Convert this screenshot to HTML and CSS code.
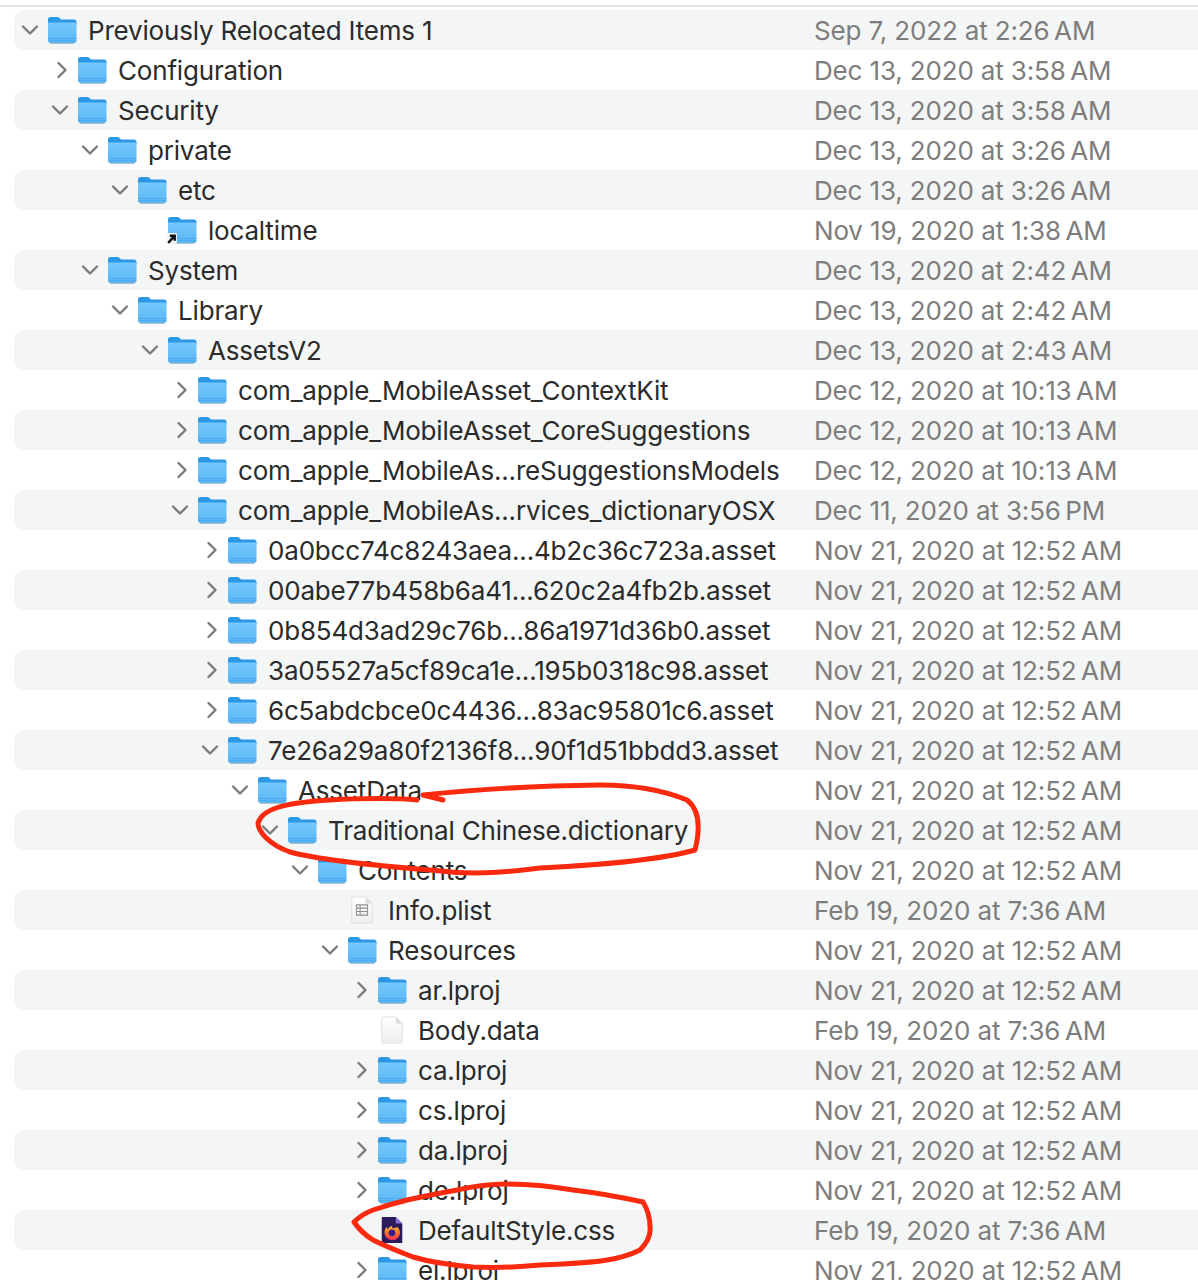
FILE: index.html
```html
<!DOCTYPE html>
<html lang="en">
<head>
<meta charset="utf-8">
<title>Previously Relocated Items</title>
<link rel="stylesheet" href="styles.css">
</head>
<body>
<svg class="defs" width="0" height="0" aria-hidden="true">
  <defs>
    <linearGradient id="fbody" x1="0" y1="0" x2="0" y2="1"><stop offset="0" stop-color="#74c9fc"/><stop offset="1" stop-color="#5ab6f5"/></linearGradient>
    <linearGradient id="fpage" x1="0" y1="0" x2="0" y2="1"><stop offset="0" stop-color="#ffffff"/><stop offset="1" stop-color="#eeeeee"/></linearGradient>
    <linearGradient id="ffire" x1="0" y1="0" x2="0" y2="1"><stop offset="0" stop-color="#ffc02e"/><stop offset=".55" stop-color="#ff6a2a"/><stop offset="1" stop-color="#ec2a6a"/></linearGradient>
    <symbol id="folder" viewBox="0 0 30 28">
      <path d="M1 5.500V3.500C1 2 2 1 3.500 1H10C11.500 1 12 1.500 13 2.500L14 3.500H27C28.500 3.500 29.500 4.500 29.500 6V9H1Z" fill="#2c97e6"/>
      <path d="M1 6.500H27.500C28.800 6.500 29.500 7.200 29.500 8.500V24.500C29.500 26 28.500 27 27 27H3.500C2 27 1 26 1 24.500Z" fill="url(#fbody)"/>
      <path d="M1 22.500H29.500M1 24.800H29.500" stroke="#3f9fe6" stroke-width=".8" opacity=".7" fill="none"/>
      <path d="M3 27.500H27.500" stroke="#9aa7b0" stroke-width="1" opacity=".7"/>
    </symbol>
    <symbol id="chev-open" viewBox="0 0 20 20"><path d="M3 6.500L10 13.500L17 6.500" fill="none" stroke="#7b7b7b" stroke-width="2.400" stroke-linecap="round" stroke-linejoin="round"/></symbol>
    <symbol id="chev-closed" viewBox="0 0 20 20"><path d="M8.500 3L15.500 10L8.500 17" fill="none" stroke="#7b7b7b" stroke-width="2.400" stroke-linecap="round" stroke-linejoin="round"/></symbol>
    <symbol id="doc" viewBox="0 0 30 30">
      <path d="M5.500 1H19L26 8V27.500C26 28.300 25.500 29 24.500 29H5.500C4.500 29 4 28.300 4 27.500V2.500C4 1.700 4.500 1 5.500 1Z" fill="url(#fpage)" stroke="#d8d8d8" stroke-width=".8"/>
      <path d="M19 1V8H26Z" fill="#dcdcdc"/>
    </symbol>
    <symbol id="plist" viewBox="0 0 30 30">
      <use href="#doc" width="30" height="30"/>
      <path d="M9 9.500H21V20.500H9ZM9 13H21M9 16.700H21M13 9.500V20.500" fill="none" stroke="#8e8e8e" stroke-width="1.100"/>
    </symbol>
    <symbol id="css" viewBox="0 0 30 30">
      <path d="M5 1H19L26 8V28C26 28.600 25.600 29 25 29H5C4.400 29 4 28.600 4 28V2C4 1.400 4.400 1 5 1Z" fill="#2b1b5e"/>
      <path d="M19 1V8H26Z" fill="#8c6fd8"/>
      <path d="M7 17.500C7 15 8 13 9.500 11.500C9.500 13 10 14 11 14C11.500 12 13.500 11 15.500 10.500C15 11.500 15 12.500 15.500 13C18 12.500 20 13 20.500 11.500C22.500 13.500 23.500 15.500 23.500 18C23.500 22.500 19.800 26 15.200 26C10.700 26 7 22.300 7 17.500Z" fill="url(#ffire)"/>
      <circle cx="15" cy="18" r="3.600" fill="#3a1f8a"/>
    </symbol>
  </defs>
</svg>

<main class="list">
  <div class="row d0"><div class="name"><svg class="chev"><use href="#chev-open"/></svg><svg class="ico"><use href="#folder"/></svg><span class="label">Previously Relocated Items 1</span></div><div class="date">Sep 7, 2022 at 2:26&thinsp;AM</div></div>
  <div class="row d1"><div class="name"><svg class="chev"><use href="#chev-closed"/></svg><svg class="ico"><use href="#folder"/></svg><span class="label">Configuration</span></div><div class="date">Dec 13, 2020 at 3:58&thinsp;AM</div></div>
  <div class="row d1"><div class="name"><svg class="chev"><use href="#chev-open"/></svg><svg class="ico"><use href="#folder"/></svg><span class="label">Security</span></div><div class="date">Dec 13, 2020 at 3:58&thinsp;AM</div></div>
  <div class="row d2"><div class="name"><svg class="chev"><use href="#chev-open"/></svg><svg class="ico"><use href="#folder"/></svg><span class="label">private</span></div><div class="date">Dec 13, 2020 at 3:26&thinsp;AM</div></div>
  <div class="row d3"><div class="name"><svg class="chev"><use href="#chev-open"/></svg><svg class="ico"><use href="#folder"/></svg><span class="label">etc</span></div><div class="date">Dec 13, 2020 at 3:26&thinsp;AM</div></div>
  <div class="row d4"><div class="name"><span class="chev"></span><span class="alias"><svg class="ico"><use href="#folder"/></svg><svg class="badge" viewBox="0 0 12 12"><rect x="1" y="1" width="10" height="10" rx="1" fill="#f2f6f8"/><path d="M3 10L8 4.500M4.500 3.500H9V8" fill="none" stroke="#111" stroke-width="2.200"/></svg></span><span class="label">localtime</span></div><div class="date">Nov 19, 2020 at 1:38&thinsp;AM</div></div>
  <div class="row d2"><div class="name"><svg class="chev"><use href="#chev-open"/></svg><svg class="ico"><use href="#folder"/></svg><span class="label">System</span></div><div class="date">Dec 13, 2020 at 2:42&thinsp;AM</div></div>
  <div class="row d3"><div class="name"><svg class="chev"><use href="#chev-open"/></svg><svg class="ico"><use href="#folder"/></svg><span class="label">Library</span></div><div class="date">Dec 13, 2020 at 2:42&thinsp;AM</div></div>
  <div class="row d4"><div class="name"><svg class="chev"><use href="#chev-open"/></svg><svg class="ico"><use href="#folder"/></svg><span class="label">AssetsV2</span></div><div class="date">Dec 13, 2020 at 2:43&thinsp;AM</div></div>
  <div class="row d5"><div class="name"><svg class="chev"><use href="#chev-closed"/></svg><svg class="ico"><use href="#folder"/></svg><span class="label">com_apple_MobileAsset_ContextKit</span></div><div class="date">Dec 12, 2020 at 10:13&thinsp;AM</div></div>
  <div class="row d5"><div class="name"><svg class="chev"><use href="#chev-closed"/></svg><svg class="ico"><use href="#folder"/></svg><span class="label">com_apple_MobileAsset_CoreSuggestions</span></div><div class="date">Dec 12, 2020 at 10:13&thinsp;AM</div></div>
  <div class="row d5"><div class="name"><svg class="chev"><use href="#chev-closed"/></svg><svg class="ico"><use href="#folder"/></svg><span class="label">com_apple_MobileAs...reSuggestionsModels</span></div><div class="date">Dec 12, 2020 at 10:13&thinsp;AM</div></div>
  <div class="row d5"><div class="name"><svg class="chev"><use href="#chev-open"/></svg><svg class="ico"><use href="#folder"/></svg><span class="label">com_apple_MobileAs...rvices_dictionaryOSX</span></div><div class="date">Dec 11, 2020 at 3:56&thinsp;PM</div></div>
  <div class="row d6"><div class="name"><svg class="chev"><use href="#chev-closed"/></svg><svg class="ico"><use href="#folder"/></svg><span class="label">0a0bcc74c8243aea...4b2c36c723a.asset</span></div><div class="date">Nov 21, 2020 at 12:52&thinsp;AM</div></div>
  <div class="row d6"><div class="name"><svg class="chev"><use href="#chev-closed"/></svg><svg class="ico"><use href="#folder"/></svg><span class="label">00abe77b458b6a41...620c2a4fb2b.asset</span></div><div class="date">Nov 21, 2020 at 12:52&thinsp;AM</div></div>
  <div class="row d6"><div class="name"><svg class="chev"><use href="#chev-closed"/></svg><svg class="ico"><use href="#folder"/></svg><span class="label">0b854d3ad29c76b...86a1971d36b0.asset</span></div><div class="date">Nov 21, 2020 at 12:52&thinsp;AM</div></div>
  <div class="row d6"><div class="name"><svg class="chev"><use href="#chev-closed"/></svg><svg class="ico"><use href="#folder"/></svg><span class="label">3a05527a5cf89ca1e...195b0318c98.asset</span></div><div class="date">Nov 21, 2020 at 12:52&thinsp;AM</div></div>
  <div class="row d6"><div class="name"><svg class="chev"><use href="#chev-closed"/></svg><svg class="ico"><use href="#folder"/></svg><span class="label">6c5abdcbce0c4436...83ac95801c6.asset</span></div><div class="date">Nov 21, 2020 at 12:52&thinsp;AM</div></div>
  <div class="row d6"><div class="name"><svg class="chev"><use href="#chev-open"/></svg><svg class="ico"><use href="#folder"/></svg><span class="label">7e26a29a80f2136f8...90f1d51bbdd3.asset</span></div><div class="date">Nov 21, 2020 at 12:52&thinsp;AM</div></div>
  <div class="row d7"><div class="name"><svg class="chev"><use href="#chev-open"/></svg><svg class="ico"><use href="#folder"/></svg><span class="label">AssetData</span></div><div class="date">Nov 21, 2020 at 12:52&thinsp;AM</div></div>
  <div class="row d8"><div class="name"><svg class="chev"><use href="#chev-open"/></svg><svg class="ico"><use href="#folder"/></svg><span class="label">Traditional Chinese.dictionary</span></div><div class="date">Nov 21, 2020 at 12:52&thinsp;AM</div></div>
  <div class="row d9"><div class="name"><svg class="chev"><use href="#chev-open"/></svg><svg class="ico"><use href="#folder"/></svg><span class="label">Contents</span></div><div class="date">Nov 21, 2020 at 12:52&thinsp;AM</div></div>
  <div class="row d10"><div class="name"><span class="chev"></span><svg class="ico"><use href="#plist"/></svg><span class="label">Info.plist</span></div><div class="date">Feb 19, 2020 at 7:36&thinsp;AM</div></div>
  <div class="row d10"><div class="name"><svg class="chev"><use href="#chev-open"/></svg><svg class="ico"><use href="#folder"/></svg><span class="label">Resources</span></div><div class="date">Nov 21, 2020 at 12:52&thinsp;AM</div></div>
  <div class="row d11"><div class="name"><svg class="chev"><use href="#chev-closed"/></svg><svg class="ico"><use href="#folder"/></svg><span class="label">ar.lproj</span></div><div class="date">Nov 21, 2020 at 12:52&thinsp;AM</div></div>
  <div class="row d11"><div class="name"><span class="chev"></span><svg class="ico"><use href="#doc"/></svg><span class="label">Body.data</span></div><div class="date">Feb 19, 2020 at 7:36&thinsp;AM</div></div>
  <div class="row d11"><div class="name"><svg class="chev"><use href="#chev-closed"/></svg><svg class="ico"><use href="#folder"/></svg><span class="label">ca.lproj</span></div><div class="date">Nov 21, 2020 at 12:52&thinsp;AM</div></div>
  <div class="row d11"><div class="name"><svg class="chev"><use href="#chev-closed"/></svg><svg class="ico"><use href="#folder"/></svg><span class="label">cs.lproj</span></div><div class="date">Nov 21, 2020 at 12:52&thinsp;AM</div></div>
  <div class="row d11"><div class="name"><svg class="chev"><use href="#chev-closed"/></svg><svg class="ico"><use href="#folder"/></svg><span class="label">da.lproj</span></div><div class="date">Nov 21, 2020 at 12:52&thinsp;AM</div></div>
  <div class="row d11"><div class="name"><svg class="chev"><use href="#chev-closed"/></svg><svg class="ico"><use href="#folder"/></svg><span class="label">de.lproj</span></div><div class="date">Nov 21, 2020 at 12:52&thinsp;AM</div></div>
  <div class="row d11"><div class="name"><span class="chev"></span><svg class="ico"><use href="#css"/></svg><span class="label">DefaultStyle.css</span></div><div class="date">Feb 19, 2020 at 7:36&thinsp;AM</div></div>
  <div class="row d11"><div class="name"><svg class="chev"><use href="#chev-closed"/></svg><svg class="ico"><use href="#folder"/></svg><span class="label">el.lproj</span></div><div class="date">Nov 21, 2020 at 12:52&thinsp;AM</div></div>
</main>

<svg class="scribbles" viewBox="0 0 1198 1280" aria-hidden="true">
  <path d="M443 800L423 795C470 790 520 786 600 785C640 785 670 793 687 800C700 810 700 830 695 850C660 860 600 865 540 868C500 873 470 875 430 870C380 866 320 860 290 852C270 845 258 832 258 823C262 810 280 803 330 800C360 798 400 798 417 800"/>
  <path d="M643 1202C620 1197 590 1192 573 1190C550 1186 530 1184 507 1184C490 1184 470 1187 457 1190C440 1193 425 1196 407 1200C395 1203 385 1206 373 1210C362 1214 358 1218 354 1222C358 1228 365 1235 373 1240C385 1246 400 1252 413 1257C430 1262 450 1265 473 1267C495 1268 520 1267 540 1265C565 1264 590 1263 607 1260C620 1258 632 1254 640 1250C648 1242 651 1235 650 1227C650 1218 648 1210 643 1202"/>
</svg>
</body>
</html>
```

FILE: styles.css
```css
html, body {
  margin: 0;
  height: 1280px;
  overflow: hidden;
  background: #fff;
}

body {
  position: relative;
  font-family: "Inter", "Liberation Sans", sans-serif;
  font-size: 26px;
}

.defs {
  position: absolute;
}

.list {
  margin-top: 5px;
  border-top: 2px solid #e4e4e4;
  padding: 3px 0 0 14px;
}

.row {
  display: flex;
  align-items: center;
  height: 40px;
  border-radius: 10px 0 0 10px;
}

.row:nth-child(odd) {
  background: #f4f5f5;
}

.name {
  display: flex;
  align-items: center;
  flex: 0 0 800px;
  box-sizing: border-box;
  white-space: nowrap;
}

.d0 .name { padding-left: 6px; }
.d1 .name { padding-left: 36px; }
.d2 .name { padding-left: 66px; }
.d3 .name { padding-left: 96px; }
.d4 .name { padding-left: 126px; }
.d5 .name { padding-left: 156px; }
.d6 .name { padding-left: 186px; }
.d7 .name { padding-left: 216px; }
.d8 .name { padding-left: 246px; }
.d9 .name { padding-left: 276px; }
.d10 .name { padding-left: 306px; }
.d11 .name { padding-left: 336px; }

.chev {
  flex: 0 0 20px;
  width: 20px;
  height: 20px;
  margin-right: 7px;
}

.ico {
  flex: 0 0 30px;
  width: 30px;
  height: 28px;
}

.alias {
  position: relative;
  display: flex;
}

.badge {
  position: absolute;
  left: -2px;
  bottom: -1px;
  width: 13px;
  height: 13px;
}

.label {
  margin-left: 11px;
  color: #2b2b2b;
  letter-spacing: -0.18px;
}

.date {
  color: #7d7d7d;
  white-space: nowrap;
  letter-spacing: -0.15px;
}

.scribbles {
  position: absolute;
  left: 0;
  top: 0;
  width: 1198px;
  height: 1280px;
  pointer-events: none;
  fill: none;
  stroke: #fa2a0e;
  stroke-width: 5;
  stroke-linecap: round;
  stroke-linejoin: round;
}
```
